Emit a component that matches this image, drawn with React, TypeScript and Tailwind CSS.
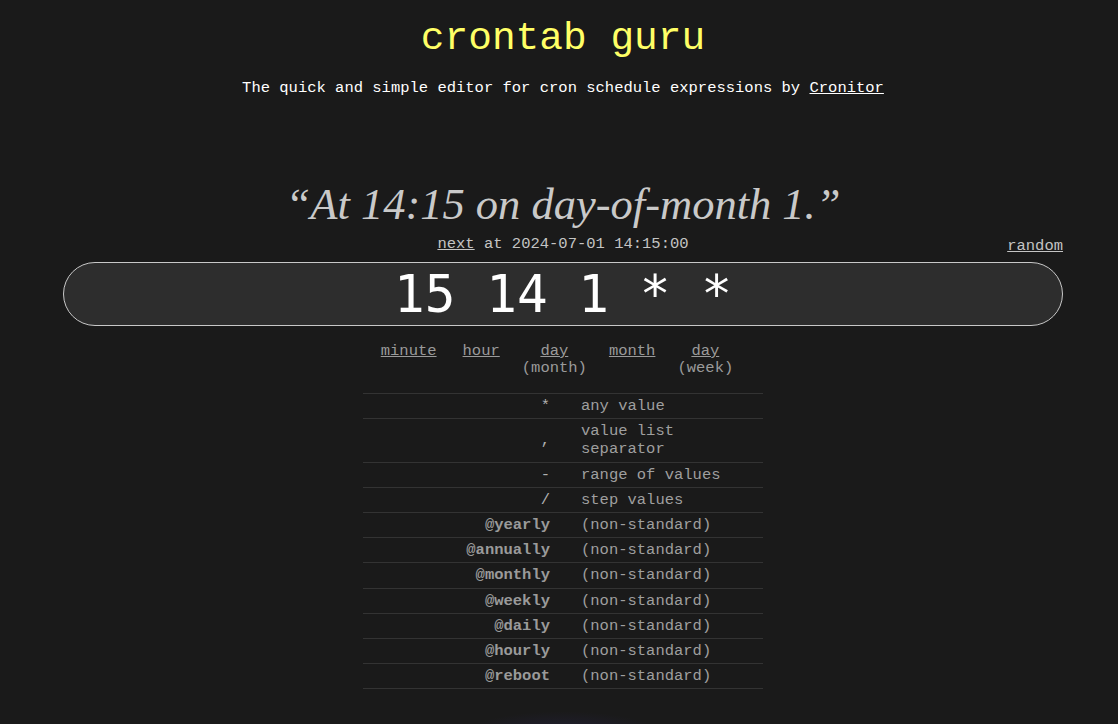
import React from "react";

const mono = "font-['Liberation_Mono','Courier_New',monospace]";

const fields = [
  { name: "minute" },
  { name: "hour" },
  { name: "day", sub: "(month)" },
  { name: "month" },
  { name: "day", sub: "(week)" },
];

const rows: { key: string; desc: string; bold?: boolean }[] = [
  { key: "*", desc: "any value" },
  { key: ",", desc: "value list separator" },
  { key: "-", desc: "range of values" },
  { key: "/", desc: "step values" },
  { key: "@yearly", desc: "(non-standard)", bold: true },
  { key: "@annually", desc: "(non-standard)", bold: true },
  { key: "@monthly", desc: "(non-standard)", bold: true },
  { key: "@weekly", desc: "(non-standard)", bold: true },
  { key: "@daily", desc: "(non-standard)", bold: true },
  { key: "@hourly", desc: "(non-standard)", bold: true },
  { key: "@reboot", desc: "(non-standard)", bold: true },
];

export default function App() {
  return (
    <div className={`min-h-[724px] bg-[#1a1a1a] ${mono} flex justify-center pl-[8px] overflow-hidden`}>
      <div className="w-[1000px] flex flex-col items-center">
        <h1 className="mt-[17px] text-[39.5px] leading-[44px] text-[#ffff66] font-normal">crontab guru</h1>
        <p className="mt-[18px] text-[15.5px] leading-[18px] text-white">
          The quick and simple editor for cron schedule expressions by <a className="underline">Cronitor</a>
        </p>

        <div className="mt-[82px] font-['Liberation_Serif','Times_New_Roman',serif] italic text-[44.5px] leading-[50px] text-[#c9c9c9]">
          “At 14:15 on day-of-month 1.”
        </div>

        <div className="w-full relative mt-[6px] h-[18px] text-[15.5px] leading-[18px] text-[#c4c4c4] text-center">
          <span className="underline">next</span> at 2024-07-01 14:15:00
          <a className="absolute right-0 top-[2px] underline text-[#c4c4c4]">random</a>
        </div>

        <div className="w-full mt-[9px] h-[64px] rounded-full border border-[#c8c8c8] bg-[#2d2d2d] flex items-center justify-center">
          <span className="font-['DejaVu_Sans_Mono',monospace] text-[51px] leading-none text-white">15 14 1 * *</span>
        </div>

        <div className="mt-[17px] mr-[12px] flex text-[15.5px] leading-[17px] text-[#9a9a9a] text-center">
          {fields.map((f, i) => (
            <div key={i} className={`flex flex-col items-center ${i === 0 ? "" : i === 1 ? "ml-[26px]" : "ml-[22px]"}`}>
              <span className="underline">{f.name}</span>
              {f.sub && <span>{f.sub}</span>}
            </div>
          ))}
        </div>

        <table className="mt-[16px] w-[400px] border-collapse text-[15.5px] leading-[18.2px]">
          <tbody>
            {rows.map((r) => (
              <tr key={r.key} className="border-t border-b border-[#333333]">
                <td className={`w-[200px] pr-[13px] py-[3px] text-right align-middle ${r.bold ? "font-bold text-[#9a9a9a]" : "text-[#b0b0b0]"}`}>
                  {r.key}
                </td>
                <td className="pl-[18px] pr-[12px] py-[3px] text-[#9f9f9f]">{r.desc}</td>
              </tr>
            ))}
          </tbody>
        </table>

        <div className="mt-[22px] w-[220px] h-[30px] bg-[radial-gradient(ellipse_at_center_bottom,#23203a_0%,#1a1a1a_70%)]" />
      </div>
    </div>
  );
}
